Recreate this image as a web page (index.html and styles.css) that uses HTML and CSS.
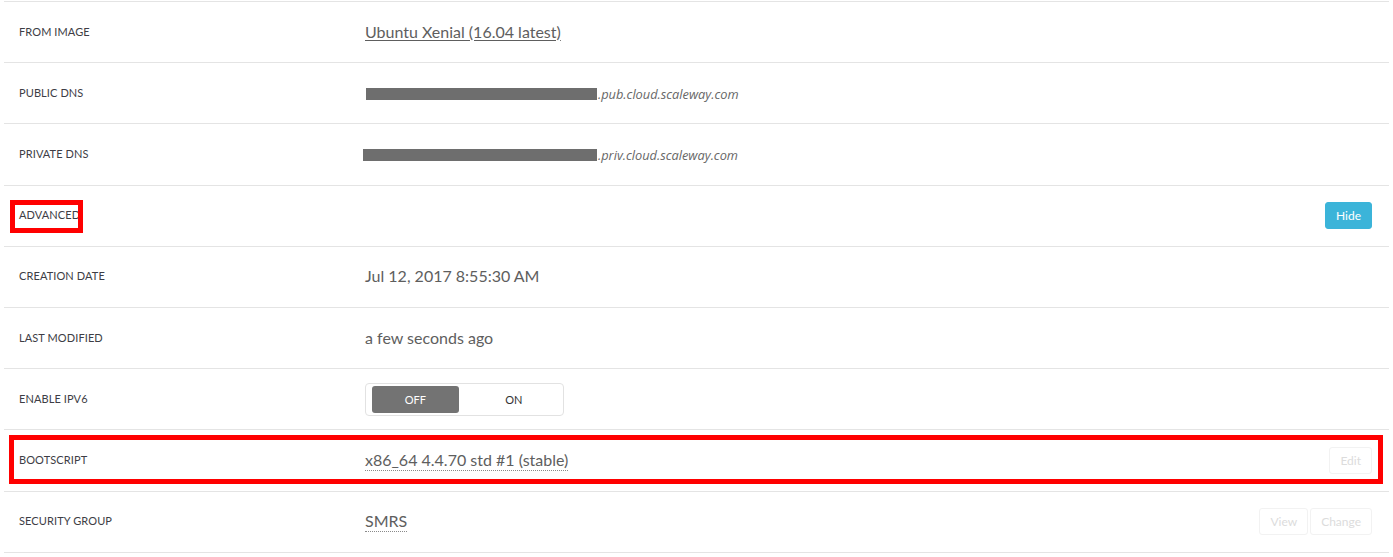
FILE: index.html
```html
<!DOCTYPE html>
<html>
<head>
<meta charset="utf-8">
<link rel="stylesheet" href="styles.css">
</head>
<body>
<div class="details">
  <div class="row">
    <div class="label">FROM IMAGE</div>
    <div class="value"><a class="link" href="#">Ubuntu Xenial (16.04 latest)</a></div>
    <div class="actions"></div>
  </div>
  <div class="row">
    <div class="label">PUBLIC DNS</div>
    <div class="value dns"><span class="redact redact-pub"></span><span class="dns-text">.pub.cloud.scaleway.com</span></div>
    <div class="actions"></div>
  </div>
  <div class="row">
    <div class="label">PRIVATE DNS</div>
    <div class="value dns dns-priv"><span class="redact redact-priv"></span><span class="dns-text">.priv.cloud.scaleway.com</span></div>
    <div class="actions"></div>
  </div>
  <div class="row">
    <div class="label">ADVANCED</div>
    <div class="value"></div>
    <div class="actions"><button class="btn btn-primary">Hide</button></div>
  </div>
  <div class="row">
    <div class="label">CREATION DATE</div>
    <div class="value">Jul 12, 2017 8:55:30 AM</div>
    <div class="actions"></div>
  </div>
  <div class="row">
    <div class="label">LAST MODIFIED</div>
    <div class="value">a few seconds ago</div>
    <div class="actions"></div>
  </div>
  <div class="row">
    <div class="label">ENABLE IPV6</div>
    <div class="value">
      <div class="toggle">
        <span class="opt opt-active">OFF</span>
        <span class="opt">ON</span>
      </div>
    </div>
    <div class="actions"></div>
  </div>
  <div class="row">
    <div class="label">BOOTSCRIPT</div>
    <div class="value"><span class="dotted">x86_64 4.4.70 std #1 (stable)</span></div>
    <div class="actions"><button class="btn btn-ghost">Edit</button></div>
  </div>
  <div class="row">
    <div class="label">SECURITY GROUP</div>
    <div class="value"><span class="dotted">SMRS</span></div>
    <div class="actions"><button class="btn btn-ghost">View</button><button class="btn btn-ghost">Change</button></div>
  </div>
  <div class="mark mark-advanced"></div>
  <div class="mark mark-bootscript"></div>
</div>
</body>
</html>
```

FILE: styles.css
```css
html, body {
  margin: 0;
  padding: 0;
  background: #ffffff;
}
body {
  font-family: Lato, "Open Sans", sans-serif;
  color: #5c5c5c;
}
.details {
  position: relative;
  margin: 1px 4px 0 4px;
  border-top: 1px solid #e4e4e4;
}
.row {
  display: grid;
  grid-template-columns: 346px 1fr auto;
  align-items: center;
  height: 60.2px;
  padding: 0 17px 0 15px;
  border-bottom: 1px solid #e4e4e4;
}
.label,
.value {
  margin-top: -2px;
}
.label {
  font-size: 11px;
  color: #3d3d45;
  letter-spacing: 0.1px;
}
.value {
  font-size: 16px;
  color: #5e5e5e;
}
.link {
  color: #5e5e5e;
  text-decoration: underline;
  text-underline-offset: 2px;
}
.dns {
  display: flex;
  align-items: center;
  font-family: "Open Sans", Lato, sans-serif;
  font-size: 12.8px;
  font-style: italic;
  color: #676767;
  padding-top: 4px;
}
.dns-priv {
  margin-left: -2px;
}
.redact {
  display: inline-block;
  height: 12px;
  background: #6e6e6e;
}
.redact-pub {
  width: 231px;
  margin-left: 1px;
}
.redact-priv {
  width: 234px;
}
.dns-text {
  margin-left: 1px;
}
.dotted {
  border-bottom: 1px dotted #8a8a8a;
  padding-bottom: 1px;
}
.actions {
  display: flex;
  gap: 2px;
}
.btn {
  font-family: Lato, "Open Sans", sans-serif;
  font-size: 12px;
  height: 27px;
  padding: 0 10px;
  border-radius: 3px;
  cursor: pointer;
}
.btn-primary {
  background: #3bb4d9;
  color: #ffffff;
  border: 1px solid #3bb4d9;
  width: 47px;
}
.btn-ghost {
  background: #ffffff;
  color: #dcdcdc;
  border: 1px solid #f2f2f2;
}
.toggle {
  display: inline-flex;
  gap: 12px;
  width: 185px;
  margin-top: 2px;
  padding: 2px 6px;
  border: 1px solid #e2e2e2;
  border-radius: 4px;
}
.opt {
  display: flex;
  align-items: center;
  justify-content: center;
  width: 87px;
  height: 27px;
  font-size: 11px;
  color: #333333;
  border-radius: 3px;
}
.opt-active {
  background: #737373;
  color: #ffffff;
}
.mark {
  position: absolute;
  border: 5px solid #ff0000;
  box-sizing: border-box;
  pointer-events: none;
}
.mark-advanced {
  left: 6px;
  top: 198px;
  width: 73px;
  height: 33px;
}
.mark-bootscript {
  left: 5px;
  top: 433px;
  width: 1374px;
  height: 49px;
}
```
